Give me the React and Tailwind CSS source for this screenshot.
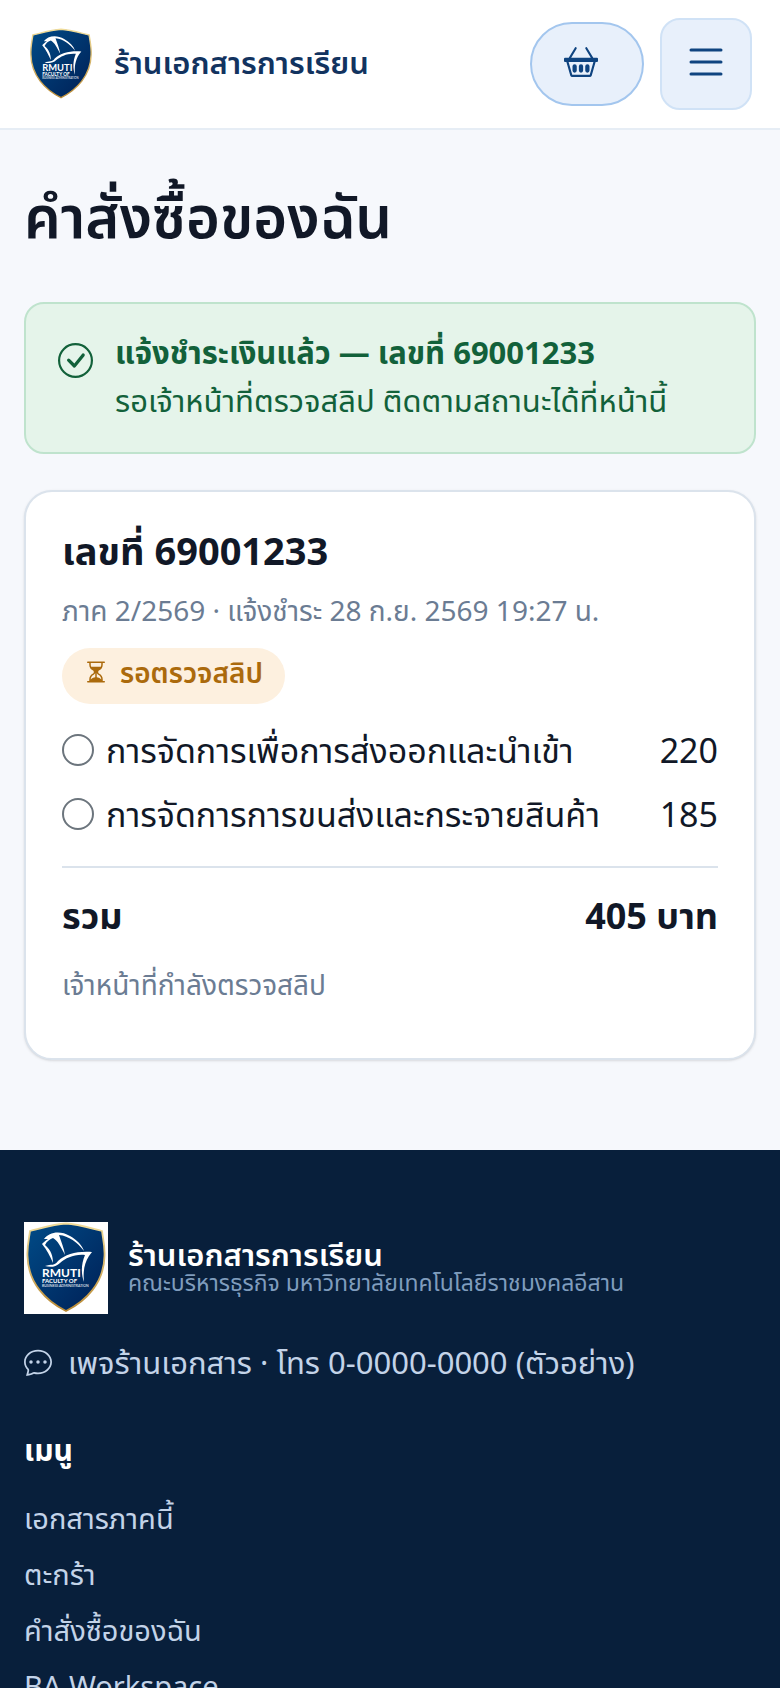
import { BsBasket2, BsChatDots, BsCheckCircle, BsCircle, BsHourglassSplit, BsList } from 'react-icons/bs'

const order = {
  no: '69001233',
  meta: 'ภาค 2/2569 · แจ้งชำระ 28 ก.ย. 2569 19:27 น.',
  status: 'รอตรวจสลิป',
  note: 'เจ้าหน้าที่กำลังตรวจสลิป',
  items: [
    { name: 'การจัดการเพื่อการส่งออกและนำเข้า', price: 220 },
    { name: 'การจัดการการขนส่งและกระจายสินค้า', price: 185 },
  ],
}

const menuLinks = ['เอกสารภาคนี้', 'ตะกร้า', 'คำสั่งซื้อของฉัน', 'BA Workspace']

function FacultyLogo({ className }) {
  return (
    <svg viewBox="0 0 84 92" className={className} role="img" aria-label="RMUTI">
      <defs>
        <linearGradient id="shield" x1="0" y1="0" x2="1" y2="1">
          <stop offset="0" stopColor="#004b87" />
          <stop offset="1" stopColor="#001f55" />
        </linearGradient>
        <linearGradient id="rim" x1="0" y1="0" x2="0" y2="1">
          <stop offset="0" stopColor="#f0dc9a" />
          <stop offset="1" stopColor="#b98a35" />
        </linearGradient>
      </defs>
      <rect width="84" height="92" fill="#fff" />
      <path
        d="M6 9C18 6 31 2 42 1.500C53 2 66 6 78 9C79 17 81 24 80.500 34C80 61 62 79 42 89C22 79 4 61 3.500 34C3 24 5 17 6 9Z"
        fill="url(#shield)"
        stroke="url(#rim)"
        strokeWidth="1.800"
      />
      <path
        d="M20 17C25 10 36 8 46 14C53 18 58 23 60 29C53 20 45 14 35 13C37 19 40 26 41 33C37 25 34 19 29 16C26 17 23 19 21 23C27 28 29 34 29 41C26 34 23 28 18 22C20 20 22 18 24 17Z"
        fill="#fff"
      />
      <path
        d="M21 44C27 42 31 44 34 39C42 32 53 29 68 30L65 34C60 42 59 50 60 60C57 52 57 42 61 33C50 32 42 36 36 41C31 46 25 45 21 44Z"
        fill="#fff"
      />
      <text x="18" y="55" fontSize="12" fontWeight="700" fill="#fff" fontFamily="Lato, sans-serif">RMUTI</text>
      <text x="18" y="61" fontSize="6" fontWeight="700" fill="#fff" fontFamily="Lato, sans-serif">FACULTY OF</text>
      <text x="18" y="65" fontSize="3.500" fill="#fff" fontFamily="Lato, sans-serif">BUSINESS ADMINISTRATION</text>
    </svg>
  )
}

function Header() {
  return (
    <header className="flex items-center justify-between border-b-2 border-[#e6edf5] bg-white px-7 py-[18px]">
      <a href="#" className="flex items-center gap-5">
        <FacultyLogo className="h-[72px] w-[66px]" />
        <span className="pb-1 text-[31px] leading-10 font-semibold text-[#12335f]">ร้านเอกสารการเรียน</span>
      </a>
      <div className="flex items-center gap-4">
        <button
          type="button"
          aria-label="ตะกร้า"
          className="flex h-[84px] w-[114px] items-center rounded-full border-2 border-[#a3c6ee] bg-[#e8f0fb] pb-1 pl-8 text-[#0f4480]"
        >
          <BsBasket2 className="size-[34px]" />
        </button>
        <button
          type="button"
          aria-label="เมนู"
          className="flex size-[92px] items-center justify-center rounded-[20px] border-2 border-[#d0e2f6] bg-[#e8f0fb] pb-1 text-[#0f4480]"
        >
          <BsList className="size-12" />
        </button>
      </div>
    </header>
  )
}

function PaidNotice() {
  return (
    <div role="status" className="flex gap-[22px] rounded-[20px] border-2 border-[#bfe3cd] bg-[#e5f4ea] px-8 pt-6 pb-7 text-[#12613a]">
      <BsCheckCircle className="mt-[15px] size-[35px] shrink-0" />
      <div className="text-[31px] leading-[48px]">
        <p className="font-bold">แจ้งชำระเงินแล้ว — เลขที่ {order.no}</p>
        <p>รอเจ้าหน้าที่ตรวจสลิป ติดตามสถานะได้ที่หน้านี้</p>
      </div>
    </div>
  )
}

function OrderCard() {
  const total = order.items.reduce((sum, item) => sum + item.price, 0)

  return (
    <section className="mt-9 rounded-[28px] border-2 border-[#dbe3ec] bg-white px-9 pt-[30px] pb-[52px] shadow-sm">
      <h2 className="text-[38px] leading-[56px] font-bold">เลขที่ {order.no}</h2>
      <p className="mt-[10px] text-[28px] leading-[44px] text-[#6b7c93]">{order.meta}</p>
      <span className="mt-4 inline-flex h-14 items-center gap-3 rounded-full bg-[#fdf0df] px-[22px] pb-2 text-[28px] font-semibold text-[#ab6a0c]">
        <BsHourglassSplit className="size-6" />
        {order.status}
      </span>

      <ul className="mt-[14px] text-[34px] leading-[64px]">
        {order.items.map((item) => (
          <li key={item.name} className="flex items-center justify-between">
            <span className="flex items-center gap-3">
              <BsCircle className="size-8 shrink-0 text-[#6c757d]" />
              {item.name}
            </span>
            <span>{item.price}</span>
          </li>
        ))}
      </ul>

      <div className="mt-5 flex justify-between border-t-2 border-[#dbe3ec] pt-[18px] text-[36px] leading-[60px] font-bold">
        <span>รวม</span>
        <span>{total} บาท</span>
      </div>
      <p className="mt-4 text-[28px] leading-[44px] text-[#6b7c93]">{order.note}</p>
    </section>
  )
}

function Footer() {
  return (
    <footer className="bg-[#081f3b] px-6 pt-[72px] pb-16 text-[#c3d3e8]">
      <div className="flex items-center gap-5">
        <FacultyLogo className="h-[92px] w-[84px]" />
        <div className="pb-1">
          <p className="text-[31px] leading-8 font-semibold text-white">ร้านเอกสารการเรียน</p>
          <p className="text-[23px] leading-6 text-[#7f9cbd]">คณะบริหารธุรกิจ มหาวิทยาลัยเทคโนโลยีราชมงคลอีสาน</p>
        </div>
      </div>
      <p className="mt-6 flex items-center gap-4 text-[31px] leading-[48px]">
        <BsChatDots className="size-7 shrink-0" />
        เพจร้านเอกสาร · โทร 0-0000-0000 (ตัวอย่าง)
      </p>
      <h2 className="mt-10 text-[30px] leading-[48px] font-bold text-white">เมนู</h2>
      <ul className="mt-4 text-[29px] leading-[56px]">
        {menuLinks.map((label) => (
          <li key={label}>
            <a href="#">{label}</a>
          </li>
        ))}
      </ul>
    </footer>
  )
}

export default function App() {
  return (
    <div className="min-h-screen bg-[#f6f8fc] font-['Noto_Sans','Noto_Sans_Thai',sans-serif] text-[#111827]">
      <Header />
      <main className="px-6 pt-12 pb-[90px]">
        <h1 className="mb-12 text-[58px] leading-[76px] font-semibold">คำสั่งซื้อของฉัน</h1>
        <PaidNotice />
        <OrderCard />
      </main>
      <Footer />
    </div>
  )
}
